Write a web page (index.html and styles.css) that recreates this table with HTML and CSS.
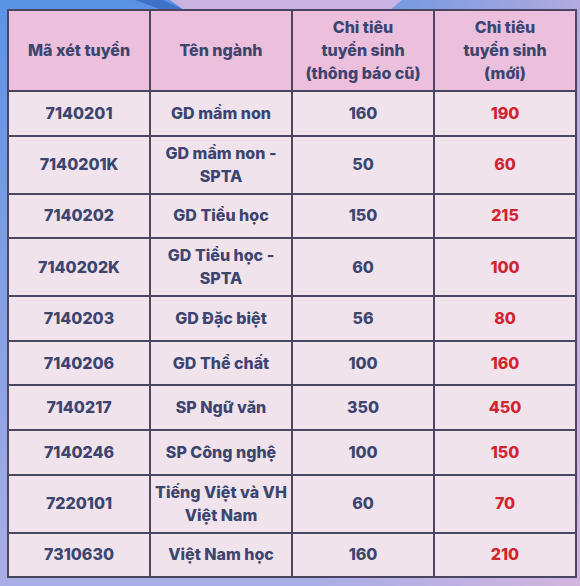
FILE: index.html
```html
<!DOCTYPE html>
<html lang="vi">
<head>
<meta charset="utf-8">
<title>Chỉ tiêu tuyển sinh</title>
<link rel="stylesheet" href="styles.css">
</head>
<body>
<div class="page">
  <div class="deco deco-dark"></div>
  <div class="deco deco-light"></div>
  <table class="quota">
    <thead>
      <tr>
        <th>Mã xét tuyển</th>
        <th>Tên ngành</th>
        <th>Chỉ tiêu<br>tuyển sinh<br>(thông báo cũ)</th>
        <th>Chỉ tiêu<br>tuyển sinh<br>(mới)</th>
      </tr>
    </thead>
    <tbody>
      <tr><td>7140201</td><td>GD mầm non</td><td>160</td><td class="new">190</td></tr>
      <tr><td>7140201K</td><td>GD mầm non -<br>SPTA</td><td>50</td><td class="new">60</td></tr>
      <tr><td>7140202</td><td>GD Tiểu học</td><td>150</td><td class="new">215</td></tr>
      <tr><td>7140202K</td><td>GD Tiểu học -<br>SPTA</td><td>60</td><td class="new">100</td></tr>
      <tr><td>7140203</td><td>GD Đặc biệt</td><td>56</td><td class="new">80</td></tr>
      <tr><td>7140206</td><td>GD Thể chất</td><td>100</td><td class="new">160</td></tr>
      <tr><td>7140217</td><td>SP Ngữ văn</td><td>350</td><td class="new">450</td></tr>
      <tr><td>7140246</td><td>SP Công nghệ</td><td>100</td><td class="new">150</td></tr>
      <tr><td>7220101</td><td>Tiếng Việt và VH<br>Việt Nam</td><td>60</td><td class="new">70</td></tr>
      <tr><td>7310630</td><td>Việt Nam học</td><td>160</td><td class="new">210</td></tr>
    </tbody>
  </table>
</div>
</body>
</html>
```
FILE: styles.css
```css
html, body {
  margin: 0;
  padding: 0;
}
body {
  width: 580px;
  height: 586px;
  overflow: hidden;
  font-family: "Inter", "Noto Sans", sans-serif;
}
.page {
  position: relative;
  width: 580px;
  height: 586px;
  padding: 9px 3px 0 7px;
  box-sizing: border-box;
  background:
    linear-gradient(90deg, rgba(255,255,255,0) 0%, rgba(255,255,255,0) 55%, rgba(236,186,218,0.6) 100%),
    linear-gradient(180deg, #5b93e4 0%, #8aa2e4 60%, #aaaee6 100%);
}
.deco {
  position: absolute;
  top: 0;
  height: 10px;
}
.deco-dark {
  left: 135px;
  width: 50px;
  background: #3f72c6;
  clip-path: polygon(0 0, 55% 0, 100% 100%, 55% 100%);
}
.deco-light {
  left: 170px;
  width: 232px;
  background: #c9b3e2;
  clip-path: polygon(0 0, 100% 0, 95% 100%, 6% 100%);
}
.quota {
  position: relative;
  width: 570px;
  border-collapse: collapse;
  table-layout: fixed;
  border: 2px solid #4a4560;
  color: #3b4570;
  font-weight: 800;
  font-size: 16px;
  line-height: 23px;
  text-align: center;
}
.quota th,
.quota td {
  border: 2px solid #4a4560;
  padding: 5px 3px;
  vertical-align: middle;
}
.quota th {
  background: #ecbfdc;
  height: 66px;
  padding: 5px 2px;
  font-weight: 800;
}
.quota tbody tr {
  height: 44.6px;
}
.quota td {
  background: #f1e3ec;
}
.quota td.new {
  color: #d0252f;
}
```
